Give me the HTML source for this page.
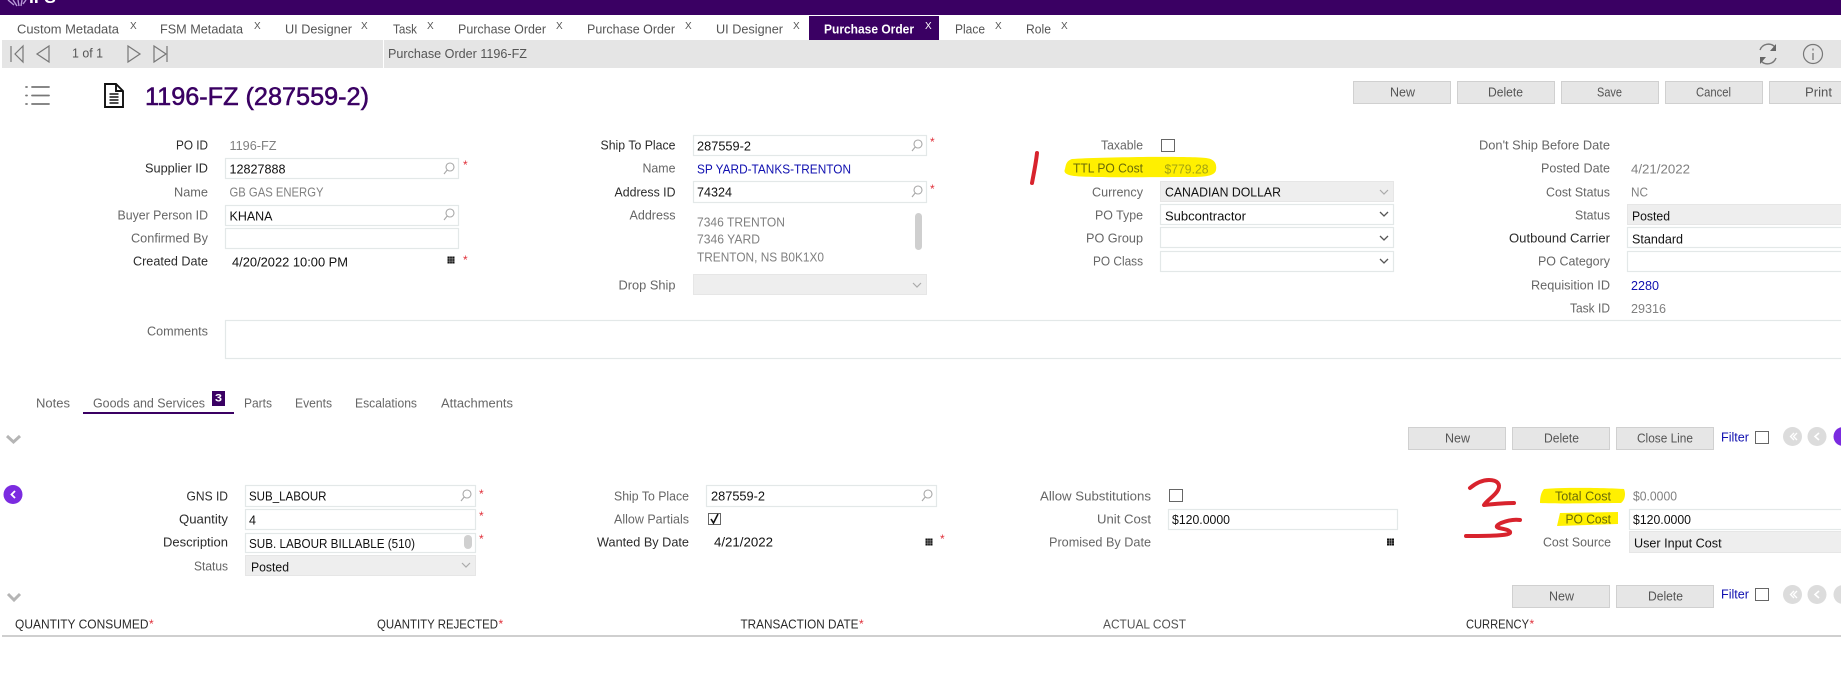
<!DOCTYPE html>
<html lang="en">
<head>
<meta charset="utf-8">
<title>Purchase Order 1196-FZ</title>
<style>
html,body{margin:0;padding:0;background:#fff;width:1841px;height:697px;overflow:hidden}
svg{display:block}
text{font-family:"Liberation Sans",sans-serif;font-size:13.3px;fill:#666;transform:translateY(-.8px)}
.d{fill:#2b2b2b}
.k{fill:#111}
.g{fill:#808080}
.b{fill:#1010b0}
.t{fill:#555}
.x{font-size:10px;fill:#555}
.r{fill:#e0303a;font-size:12px}
.box{fill:#fff;stroke:#e3e8e8;stroke-width:1.2}
.sel{fill:#eee;stroke:#e6e6e6;stroke-width:1}
.btn{fill:#e6e6e6;stroke:#d0d0d0;stroke-width:1}
.cb{fill:#fff;stroke:#666;stroke-width:1}
.ic{fill:none;stroke:#777;stroke-width:1.2}
.chev{fill:none;stroke:#555;stroke-width:1.3}
.chevg{fill:none;stroke:#aaa;stroke-width:1.2}
.red{fill:none;stroke:#d8232d;stroke-width:4;stroke-linecap:round;stroke-linejoin:round}
.hl{fill:#fff000}
.hlt{fill:#6a6a08}
</style>
</head>
<body>
<svg width="1841" height="697" viewBox="0 0 1841 697" xmlns="http://www.w3.org/2000/svg">
<defs>
<g id="s" fill="none" stroke="#a8a8a8" stroke-width="1.1"><circle cx="1" cy="-1" r="4"/><path d="M-1.800 2-5 6"/></g>
<g id="c"><rect x="-3.500" y="-3.500" width="7" height="7" fill="#111"/><path d="M-3.500-1.100H3.500M-3.500 1.100H3.500M-1.100-3.500V3.500M1.100-3.500V3.500" stroke="#fff" stroke-width=".35"/></g>
</defs>

<!-- top bar -->
<rect x="0" y="0" width="1841" height="15" fill="#3a0063"/>
<path d="M8 0 14 5M13 0 17 6M18 0 19 6M22 0 21 6M26 0 23 4" stroke="#b89ad8" stroke-width="1.4" fill="none"/>
<text x="29" y="3.800" textLength="27" lengthAdjust="spacingAndGlyphs" style="font-size:17px;font-weight:bold;fill:#fff">IFS</text>

<!-- tabs -->
<text class="t" x="17" y="34.500" textLength="102" lengthAdjust="spacingAndGlyphs">Custom Metadata</text><text class="x" x="130" y="30">X</text>
<text class="t" x="160" y="34.500" textLength="83" lengthAdjust="spacingAndGlyphs">FSM Metadata</text><text class="x" x="254" y="30">X</text>
<text class="t" x="285" y="34.500" textLength="67" lengthAdjust="spacingAndGlyphs">UI Designer</text><text class="x" x="361" y="30">X</text>
<text class="t" x="393" y="34.500" textLength="24" lengthAdjust="spacingAndGlyphs">Task</text><text class="x" x="427" y="30">X</text>
<text class="t" x="458" y="34.500" textLength="88" lengthAdjust="spacingAndGlyphs">Purchase Order</text><text class="x" x="556" y="30">X</text>
<text class="t" x="587" y="34.500" textLength="88" lengthAdjust="spacingAndGlyphs">Purchase Order</text><text class="x" x="685" y="30">X</text>
<text class="t" x="716" y="34.500" textLength="67" lengthAdjust="spacingAndGlyphs">UI Designer</text><text class="x" x="793" y="30">X</text>
<rect x="809" y="16" width="130" height="24" fill="#3a0063"/>
<text x="824" y="34.500" textLength="90" lengthAdjust="spacingAndGlyphs" style="fill:#fff;font-weight:bold">Purchase Order</text>
<text class="x" x="925" y="30" style="fill:#fff">X</text>
<text class="t" x="955" y="34.500" textLength="30" lengthAdjust="spacingAndGlyphs">Place</text><text class="x" x="995" y="30">X</text>
<text class="t" x="1026" y="34.500" textLength="25" lengthAdjust="spacingAndGlyphs">Role</text><text class="x" x="1061" y="30">X</text>

<!-- toolbar -->
<rect x="2" y="40" width="1839" height="28" fill="#e5e5e5"/>
<rect x="383" y="40" width="1" height="28" fill="#fff"/>
<path class="ic" d="M11 46V62M23 46 15 54 23 62ZM49 46 37 54 49 62ZM128 46 140 54 128 62ZM154 46 166 54 154 62ZM167 46V62"/>
<text class="t" x="72" y="58.500" textLength="31" lengthAdjust="spacingAndGlyphs">1 of 1</text>
<text class="t" x="388" y="59" textLength="139" lengthAdjust="spacingAndGlyphs">Purchase Order 1196-FZ</text>
<path d="M1760 50A9 9 0 0 1 1775 47M1776 58A9 9 0 0 1 1761 61" fill="none" stroke="#777" stroke-width="1.400"/>
<path d="M1776 44V51H1770ZM1760 64V57H1766Z" fill="#666"/>
<circle cx="1813" cy="54" r="9.500" fill="none" stroke="#777" stroke-width="1.200"/>
<path d="M1813 53V60M1813 48.500V50.500" stroke="#777" stroke-width="1.300"/>

<!-- title row -->
<path d="M26 87H27M32 87H49M26 95.500H27M32 95.500H49M26 104H27M32 104H49" stroke="#777" stroke-width="1.800" stroke-linecap="round" fill="none"/>
<path d="M105 84H116L123 91V107H105ZM116 84V91H123" fill="#fff" stroke="#111" stroke-width="1.900"/>
<path d="M109.500 94H118.500M109.500 97H118.500M109.500 100H118.500M109.500 103H118.500" stroke="#111" stroke-width="1.400"/>
<text x="145" y="106" textLength="224" lengthAdjust="spacingAndGlyphs" style="font-size:25px;fill:#3a0063;stroke:#3a0063;stroke-width:.55px">1196-FZ (287559-2)</text>

<!-- main buttons -->
<rect class="btn" x="1353.500" y="81.500" width="97" height="22"/><text class="t" x="1390" y="97.500" textLength="25" lengthAdjust="spacingAndGlyphs">New</text>
<rect class="btn" x="1457.500" y="81.500" width="97" height="22"/><text class="t" x="1488" y="97.500" textLength="35" lengthAdjust="spacingAndGlyphs">Delete</text>
<rect class="btn" x="1561.500" y="81.500" width="97" height="22"/><text class="t" x="1597" y="97.500" textLength="25" lengthAdjust="spacingAndGlyphs">Save</text>
<rect class="btn" x="1665.500" y="81.500" width="97" height="22"/><text class="t" x="1696" y="97.500" textLength="35" lengthAdjust="spacingAndGlyphs">Cancel</text>
<rect class="btn" x="1769.500" y="81.500" width="80" height="22"/><text class="t" x="1805" y="97.500" textLength="27" lengthAdjust="spacingAndGlyphs">Print</text>

<!-- column 1 -->
<text class="d" x="176" y="150.500" textLength="32" lengthAdjust="spacingAndGlyphs">PO ID</text>
<text class="g" x="229.500" y="151" textLength="47" lengthAdjust="spacingAndGlyphs">1196-FZ</text>
<text class="d" x="145" y="173.500" textLength="63" lengthAdjust="spacingAndGlyphs">Supplier ID</text>
<rect class="box" x="225.500" y="158.500" width="233" height="20"/>
<text class="k" x="229.500" y="174.500" textLength="56" lengthAdjust="spacingAndGlyphs">12827888</text>
<use href="#s" x="449" y="168"/><text class="r" x="463" y="170">*</text>
<text x="174" y="197.500" textLength="34" lengthAdjust="spacingAndGlyphs">Name</text>
<text class="g" x="229.500" y="197.500" textLength="94" lengthAdjust="spacingAndGlyphs">GB GAS ENERGY</text>
<text x="117.500" y="220.500" textLength="90.500" lengthAdjust="spacingAndGlyphs">Buyer Person ID</text>
<rect class="box" x="225.500" y="205.500" width="233" height="20"/>
<text class="k" x="229.500" y="221.500" textLength="43" lengthAdjust="spacingAndGlyphs">KHANA</text>
<use href="#s" x="449" y="214"/>
<text x="131" y="243.500" textLength="77" lengthAdjust="spacingAndGlyphs">Confirmed By</text>
<rect class="box" x="225.500" y="228.500" width="233" height="20"/>
<text class="d" x="133" y="266.500" textLength="75" lengthAdjust="spacingAndGlyphs">Created Date</text>
<text class="k" x="232" y="267.500" textLength="116" lengthAdjust="spacingAndGlyphs">4/20/2022 10:00 PM</text>
<use href="#c" x="451" y="260"/><text class="r" x="463" y="265">*</text>

<!-- column 2 -->
<text class="d" x="600.500" y="150.500" textLength="75" lengthAdjust="spacingAndGlyphs">Ship To Place</text>
<rect class="box" x="693.500" y="135.500" width="233" height="20"/>
<text class="k" x="697" y="151.500" textLength="54" lengthAdjust="spacingAndGlyphs">287559-2</text>
<use href="#s" x="917" y="145"/><text class="r" x="930" y="147">*</text>
<text x="642.500" y="173.500" textLength="33" lengthAdjust="spacingAndGlyphs">Name</text>
<text class="b" x="697" y="174.500" textLength="154" lengthAdjust="spacingAndGlyphs">SP YARD-TANKS-TRENTON</text>
<text class="d" x="614.500" y="197.500" textLength="61" lengthAdjust="spacingAndGlyphs">Address ID</text>
<rect class="box" x="693.500" y="181.500" width="233" height="21"/>
<text class="k" x="697" y="197.500" textLength="35" lengthAdjust="spacingAndGlyphs">74324</text>
<use href="#s" x="917" y="191"/><text class="r" x="930" y="194">*</text>
<text x="629.500" y="220.500" textLength="46" lengthAdjust="spacingAndGlyphs">Address</text>
<text class="g" x="697" y="227.500" textLength="88" lengthAdjust="spacingAndGlyphs">7346 TRENTON</text>
<text class="g" x="697" y="244.500" textLength="63" lengthAdjust="spacingAndGlyphs">7346 YARD</text>
<text class="g" x="697" y="262.500" textLength="127" lengthAdjust="spacingAndGlyphs">TRENTON, NS B0K1X0</text>
<rect x="915" y="213" width="7" height="37" rx="3.500" fill="#cfcfcf"/>
<text x="618.500" y="290.500" textLength="57" lengthAdjust="spacingAndGlyphs">Drop Ship</text>
<rect class="sel" x="693.500" y="274.500" width="233" height="20"/>
<path class="chevg" d="M913 283 917 287 921 283"/>

<!-- column 3 -->
<text x="1101" y="150.500" textLength="42" lengthAdjust="spacingAndGlyphs">Taxable</text>
<rect class="cb" x="1161.500" y="139.500" width="13" height="12"/>
<path class="hl" d="M1072 159C1100 157 1190 156 1206 158C1215 159 1217 164 1216 170C1215 176 1205 177 1190 177C1150 177 1095 178 1074 176C1067 175 1063 173 1065 169C1066 165 1066 161 1072 159Z"/>
<text class="hlt" x="1073" y="173.500" textLength="70" lengthAdjust="spacingAndGlyphs">TTL PO Cost</text>
<text x="1164.500" y="174.500" textLength="44" lengthAdjust="spacingAndGlyphs" style="fill:#a3a312">$779.28</text>
<path class="red" d="M1037 153C1036 163 1034 172 1032 183"/>
<text x="1092" y="197.500" textLength="51" lengthAdjust="spacingAndGlyphs">Currency</text>
<rect class="sel" x="1160.500" y="181.500" width="233" height="20"/>
<text class="k" x="1165" y="197.500" textLength="116" lengthAdjust="spacingAndGlyphs">CANADIAN DOLLAR</text>
<path class="chevg" d="M1380 190 1384 194 1388 190"/>
<text x="1095" y="220.500" textLength="48" lengthAdjust="spacingAndGlyphs">PO Type</text>
<rect class="box" x="1160.500" y="204.500" width="233" height="20"/>
<text class="k" x="1165" y="221.500" textLength="81" lengthAdjust="spacingAndGlyphs">Subcontractor</text>
<path class="chev" d="M1380 212 1384 216 1388 212"/>
<text x="1086" y="243.500" textLength="57" lengthAdjust="spacingAndGlyphs">PO Group</text>
<rect class="box" x="1160.500" y="227.500" width="233" height="20"/>
<path class="chev" d="M1380 236 1384 240 1388 236"/>
<text x="1093" y="266.500" textLength="50" lengthAdjust="spacingAndGlyphs">PO Class</text>
<rect class="box" x="1160.500" y="251.500" width="233" height="20"/>
<path class="chev" d="M1380 259 1384 263 1388 259"/>

<!-- column 4 -->
<text x="1479" y="150.500" textLength="131" lengthAdjust="spacingAndGlyphs">Don't Ship Before Date</text>
<text x="1541" y="173.500" textLength="69" lengthAdjust="spacingAndGlyphs">Posted Date</text>
<text class="g" x="1631" y="174.500" textLength="59" lengthAdjust="spacingAndGlyphs">4/21/2022</text>
<text x="1546" y="197.500" textLength="64" lengthAdjust="spacingAndGlyphs">Cost Status</text>
<text class="g" x="1631" y="197.500" textLength="17" lengthAdjust="spacingAndGlyphs">NC</text>
<text x="1575" y="220.500" textLength="35" lengthAdjust="spacingAndGlyphs">Status</text>
<rect class="sel" x="1627.500" y="204.500" width="230" height="20"/>
<text class="k" x="1632" y="221.500" textLength="38" lengthAdjust="spacingAndGlyphs">Posted</text>
<text class="d" x="1509" y="243.500" textLength="101" lengthAdjust="spacingAndGlyphs">Outbound Carrier</text>
<rect class="box" x="1627.500" y="227.500" width="230" height="20"/>
<text class="k" x="1632" y="244.500" textLength="51" lengthAdjust="spacingAndGlyphs">Standard</text>
<text x="1538" y="266.500" textLength="72" lengthAdjust="spacingAndGlyphs">PO Category</text>
<rect class="box" x="1627.500" y="251.500" width="230" height="20"/>
<text x="1531" y="290.500" textLength="79" lengthAdjust="spacingAndGlyphs">Requisition ID</text>
<text class="b" x="1631" y="291" textLength="28" lengthAdjust="spacingAndGlyphs">2280</text>
<text x="1570" y="313.500" textLength="40" lengthAdjust="spacingAndGlyphs">Task ID</text>
<text class="g" x="1631" y="314" textLength="35" lengthAdjust="spacingAndGlyphs">29316</text>

<!-- comments -->
<text x="147" y="336.500" textLength="61" lengthAdjust="spacingAndGlyphs">Comments</text>
<rect class="box" x="225.500" y="320.500" width="1640" height="38"/>

<!-- sub tabs -->
<text x="36" y="408.500" textLength="34" lengthAdjust="spacingAndGlyphs">Notes</text>
<text x="93" y="408.500" textLength="112" lengthAdjust="spacingAndGlyphs">Goods and Services</text>
<rect x="212" y="391" width="13" height="15" fill="#3a0063"/>
<text x="215" y="402.500" textLength="7" lengthAdjust="spacingAndGlyphs" style="font-size:11px;font-weight:bold;fill:#fff">3</text>
<text x="244" y="408.500" textLength="28" lengthAdjust="spacingAndGlyphs">Parts</text>
<text x="295" y="408.500" textLength="37" lengthAdjust="spacingAndGlyphs">Events</text>
<text x="355" y="408.500" textLength="62" lengthAdjust="spacingAndGlyphs">Escalations</text>
<text x="441" y="408.500" textLength="72" lengthAdjust="spacingAndGlyphs">Attachments</text>
<rect x="83" y="412" width="151" height="2" fill="#3a0063"/>
<path d="M7 436 13.500 442 20 436" fill="none" stroke="#b5b5b5" stroke-width="3"/>

<!-- sub buttons -->
<rect class="btn" x="1408.500" y="427.500" width="97" height="22"/><text class="t" x="1445" y="443.500" textLength="25" lengthAdjust="spacingAndGlyphs">New</text>
<rect class="btn" x="1512.500" y="427.500" width="97" height="22"/><text class="t" x="1544" y="443.500" textLength="35" lengthAdjust="spacingAndGlyphs">Delete</text>
<rect class="btn" x="1616.500" y="427.500" width="97" height="22"/><text class="t" x="1637" y="443.500" textLength="56" lengthAdjust="spacingAndGlyphs">Close Line</text>
<text class="b" x="1721" y="442.500" textLength="28" lengthAdjust="spacingAndGlyphs">Filter</text>
<rect class="cb" x="1755.500" y="431.500" width="13" height="12"/>
<circle cx="1792.500" cy="436.500" r="9.500" fill="#dcdcdc"/><path d="M1794 433 1790.500 436.500 1794 440M1797 433 1793.500 436.500 1797 440" fill="none" stroke="#fff" stroke-width="1.300"/>
<circle cx="1817" cy="436.500" r="9.500" fill="#dcdcdc"/><path d="M1819 433 1815 436.500 1819 440" fill="none" stroke="#fff" stroke-width="1.600"/>
<circle cx="1843" cy="436.500" r="9.500" fill="#7b2be0"/>

<!-- back circle -->
<circle cx="13" cy="494.500" r="9.500" fill="#7b2be0"/>
<path d="M15 491 11.500 494.500 15 498" fill="none" stroke="#fff" stroke-width="1.800"/>

<!-- GNS col 1 -->
<text class="d" x="186.500" y="501.500" textLength="41.500" lengthAdjust="spacingAndGlyphs">GNS ID</text>
<rect class="box" x="245.500" y="485.500" width="230" height="21"/>
<text class="k" x="249" y="501.500" textLength="77.500" lengthAdjust="spacingAndGlyphs">SUB_LABOUR</text>
<use href="#s" x="466" y="495"/><text class="r" x="479" y="499">*</text>
<text class="d" x="179" y="524.500" textLength="49" lengthAdjust="spacingAndGlyphs">Quantity</text>
<rect class="box" x="245.500" y="509.500" width="230" height="20"/>
<text class="k" x="249" y="525.500" textLength="7" lengthAdjust="spacingAndGlyphs">4</text>
<text class="r" x="479" y="521">*</text>
<text class="d" x="163" y="547.500" textLength="65" lengthAdjust="spacingAndGlyphs">Description</text>
<rect class="box" x="245.500" y="533.500" width="230" height="19"/>
<text class="k" x="249" y="549" textLength="166" lengthAdjust="spacingAndGlyphs">SUB. LABOUR BILLABLE (510)</text>
<rect x="464" y="535" width="8" height="14" rx="4" fill="#d0d0d0"/>
<text class="r" x="479" y="544">*</text>
<text x="194" y="571.500" textLength="34" lengthAdjust="spacingAndGlyphs">Status</text>
<rect class="sel" x="245.500" y="555.500" width="230" height="20"/>
<text class="k" x="251" y="572.500" textLength="38" lengthAdjust="spacingAndGlyphs">Posted</text>
<path class="chevg" d="M462 563 466 567 470 563"/>

<!-- GNS col 2 -->
<text x="614" y="501.500" textLength="75" lengthAdjust="spacingAndGlyphs">Ship To Place</text>
<rect class="box" x="706.500" y="485.500" width="230" height="21"/>
<text class="k" x="711" y="501.500" textLength="54" lengthAdjust="spacingAndGlyphs">287559-2</text>
<use href="#s" x="927" y="495"/>
<text x="614" y="524.500" textLength="75" lengthAdjust="spacingAndGlyphs">Allow Partials</text>
<rect class="cb" x="708.500" y="513.500" width="12" height="11"/>
<path d="M711 519 713.500 523 718 514" fill="none" stroke="#111" stroke-width="1.600"/>
<text class="d" x="597" y="547.500" textLength="92" lengthAdjust="spacingAndGlyphs">Wanted By Date</text>
<text class="k" x="714" y="547.500" textLength="59" lengthAdjust="spacingAndGlyphs">4/21/2022</text>
<use href="#c" x="929" y="542"/><text class="r" x="940" y="544">*</text>

<!-- GNS col 3 -->
<text x="1040" y="501.500" textLength="111" lengthAdjust="spacingAndGlyphs">Allow Substitutions</text>
<rect class="cb" x="1169.500" y="489.500" width="13" height="12"/>
<text x="1097" y="524.500" textLength="54" lengthAdjust="spacingAndGlyphs">Unit Cost</text>
<rect class="box" x="1168.500" y="509.500" width="229" height="20"/>
<text class="k" x="1172" y="525" textLength="58" lengthAdjust="spacingAndGlyphs">$120.0000</text>
<text x="1049" y="547.500" textLength="102" lengthAdjust="spacingAndGlyphs">Promised By Date</text>
<use href="#c" x="1390.500" y="542"/>

<!-- GNS col 4 -->
<path class="red" d="M1470 488C1476 483 1483 480 1489 480C1497 480 1501 484 1498 490C1495 496 1487 500 1484 505C1494 504 1505 503 1514 503"/>
<path class="red" d="M1520 520C1513 519 1506 521 1501 523C1497 525 1495 527 1499 528C1504 529 1511 530 1510 533C1509 536 1480 536 1466 536"/>
<path class="hl" d="M1544 489C1565 487 1612 488 1624 489C1626 494 1625 500 1621 503C1600 503 1560 504 1540 503C1540 498 1541 492 1544 489Z"/>
<text class="hlt" x="1555" y="501.500" textLength="56" lengthAdjust="spacingAndGlyphs">Total Cost</text>
<text class="g" x="1633" y="501.500" textLength="44" lengthAdjust="spacingAndGlyphs">$0.0000</text>
<path class="hl" d="M1560 513 1618 512 1618 524 1557 526Z"/>
<text class="hlt" x="1565.500" y="524.500" textLength="45.500" lengthAdjust="spacingAndGlyphs">PO Cost</text>
<rect class="box" x="1629.500" y="509.500" width="230" height="20"/>
<text class="k" x="1633" y="525" textLength="58" lengthAdjust="spacingAndGlyphs">$120.0000</text>
<text x="1543" y="547.500" textLength="68" lengthAdjust="spacingAndGlyphs">Cost Source</text>
<rect class="sel" x="1629.500" y="531.500" width="230" height="21"/>
<text class="k" x="1634" y="548.500" textLength="87.600" lengthAdjust="spacingAndGlyphs">User Input Cost</text>

<!-- third section -->
<path d="M8 594 14 600 20 594" fill="none" stroke="#b5b5b5" stroke-width="3"/>
<rect class="btn" x="1512.500" y="585.500" width="97" height="22"/><text class="t" x="1549" y="601.500" textLength="25" lengthAdjust="spacingAndGlyphs">New</text>
<rect class="btn" x="1616.500" y="585.500" width="97" height="22"/><text class="t" x="1648" y="601.500" textLength="35" lengthAdjust="spacingAndGlyphs">Delete</text>
<text class="b" x="1721" y="599.500" textLength="28" lengthAdjust="spacingAndGlyphs">Filter</text>
<rect class="cb" x="1755.500" y="588.500" width="13" height="12"/>
<circle cx="1792.500" cy="594.500" r="9.500" fill="#dcdcdc"/><path d="M1794 591 1790.500 594.500 1794 598M1797 591 1793.500 594.500 1797 598" fill="none" stroke="#fff" stroke-width="1.300"/>
<circle cx="1817" cy="594.500" r="9.500" fill="#dcdcdc"/><path d="M1819 591 1815 594.500 1819 598" fill="none" stroke="#fff" stroke-width="1.600"/>
<circle cx="1843" cy="594.500" r="9.500" fill="#dcdcdc"/>

<text class="d" x="15" y="629.500" textLength="133.500" lengthAdjust="spacingAndGlyphs">QUANTITY CONSUMED</text><text class="r" x="149" y="629">*</text>
<text class="d" x="377" y="629.500" textLength="121" lengthAdjust="spacingAndGlyphs">QUANTITY REJECTED</text><text class="r" x="498.500" y="629">*</text>
<text class="d" x="740.500" y="629.500" textLength="118" lengthAdjust="spacingAndGlyphs">TRANSACTION DATE</text><text class="r" x="859" y="629">*</text>
<text class="t" x="1103" y="629.500" textLength="83" lengthAdjust="spacingAndGlyphs">ACTUAL COST</text>
<text class="d" x="1466" y="629.500" textLength="63" lengthAdjust="spacingAndGlyphs">CURRENCY</text><text class="r" x="1529.500" y="629">*</text>
<rect x="2" y="635" width="1839" height="2" fill="#cfcfcf"/>
</svg>
</body>
</html>
